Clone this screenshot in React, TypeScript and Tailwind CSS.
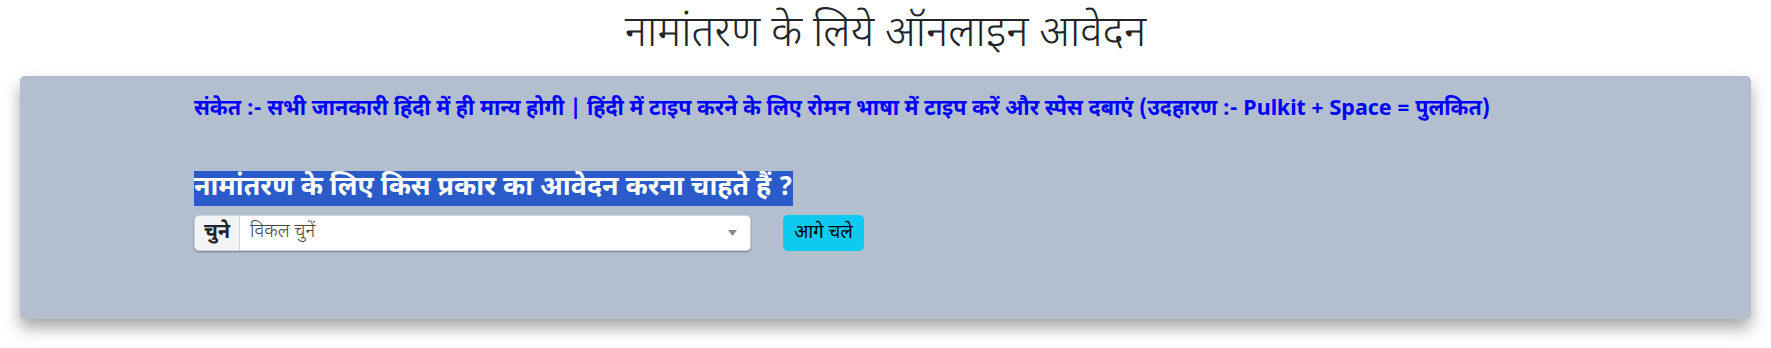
import React from 'react';

const dev = { fontFamily: '"Nirmala UI", "Noto Sans Devanagari", "Noto Sans", "Lohit Devanagari", sans-serif' };

export default function App() {
  return (
    <div className="w-[1771px] h-[348px] bg-white" style={dev}>
      <h1 className="text-center text-[42.5px] leading-[50px] pt-[11px] text-[#212529] font-light">
        नामांतरण के लिये ऑनलाइन आवेदन
      </h1>
      <div className="mx-[20px] mt-[15px] h-[243px] bg-[#b3bfcf] rounded-[5px] shadow-[0_9px_16px_rgba(0,0,0,0.35)] pl-[174px] pt-[20px]">
        <p className="text-[21.5px] leading-[28px] font-bold text-[#0000ff]">
          संकेत :- सभी जानकारी हिंदी में ही मान्य होगी | हिंदी में टाइप करने के लिए रोमन भाषा में टाइप करें और स्पेस दबाएं (उदहारण :- Pulkit + Space = पुलकित)
        </p>
        <h4 className="mt-[49px] text-[26.8px] leading-[32px] font-bold text-white">
          <span className="bg-[#2a5bc8]">नामांतरण के लिए किस प्रकार का आवेदन करना चाहते हैं ?</span>
        </h4>
        <div className="mt-[10px] flex items-center gap-[32px]">
          <div className="flex w-[557px] h-[36px] rounded-[5px] shadow-[0_1px_2px_rgba(0,0,0,0.35)]">
            <span className="w-[46px] flex items-center justify-center bg-[#f3f4f6] border border-[#ced4da] rounded-l-[5px] text-[20px] font-bold text-[#212529]">
              चुने
            </span>
            <div className="flex-1 flex items-center justify-between bg-white border border-l-0 border-[#ced4da] rounded-r-[5px] pl-[10px] pr-[13px] text-[18.5px] font-light text-[#444]">
              <span>विकल चुनें</span>
              <svg width="9" height="6" viewBox="0 0 9 6"><path d="M0 0h9L4.5 6z" fill="#888" /></svg>
            </div>
          </div>
          <button className="h-[36px] w-[81px] flex items-center justify-center pt-[2px] bg-[#0dcaf0] rounded-[5px] text-[18.5px] text-black">
            आगे चले
          </button>
        </div>
      </div>
    </div>
  );
}
